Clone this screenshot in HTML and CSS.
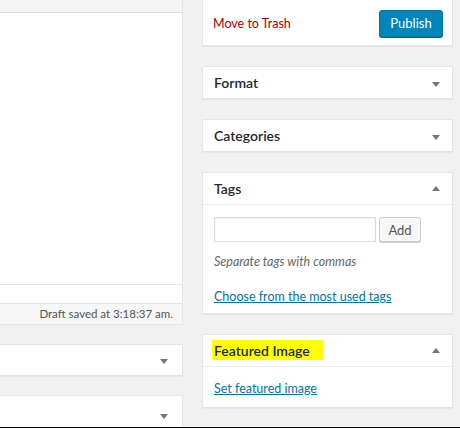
FILE: index.html
```html
<!DOCTYPE html>
<html>
<head>
<meta charset="utf-8">
<link rel="stylesheet" href="styles.css">
</head>
<body>
<div class="page">
  <div class="main">
    <div class="editor">
      <div class="toolbar"></div>
      <div class="content"></div>
      <div class="gap"></div>
      <div class="status">Draft saved at 3:18:37 am.</div>
    </div>
    <div class="postbox lbox"><span class="arrow down"></span></div>
    <div class="postbox lbox last"><span class="arrow down"></span></div>
  </div>
  <div class="side">
    <div class="postbox publish">
      <a class="trash">Move to Trash</a>
      <button class="btn-primary">Publish</button>
    </div>
    <div class="postbox">
      <div class="hndle"><h2>Format</h2><span class="arrow down"></span></div>
    </div>
    <div class="postbox">
      <div class="hndle"><h2>Categories</h2><span class="arrow down"></span></div>
    </div>
    <div class="postbox">
      <div class="hndle divided"><h2>Tags</h2><span class="arrow up"></span></div>
      <div class="inside tags">
        <div class="tag-row">
          <input class="tag-input" type="text">
          <button class="btn">Add</button>
        </div>
        <p class="howto">Separate tags with commas</p>
        <a class="link">Choose from the most used tags</a>
      </div>
    </div>
    <div class="postbox">
      <div class="hndle divided"><h2><span class="mark">Featured Image</span></h2><span class="arrow up"></span></div>
      <div class="inside featured">
        <a class="link">Set featured image</a>
      </div>
    </div>
  </div>
</div>
</body>
</html>
```
FILE: styles.css
```css
html, body {
  margin: 0;
  padding: 0;
  background: #f1f1f1;
}
body {
  font-family: Lato, "Open Sans", sans-serif;
  font-size: 12.5px;
  color: #444;
}
.page {
  height: 427px;
  border-bottom: 1px solid #000;
  overflow: hidden;
  display: flex;
  gap: 19px;
}
.main {
  width: 183px;
  flex: none;
  display: flex;
  flex-direction: column;
}
.main > * {
  flex: none;
}
.side {
  width: 251px;
  flex: none;
  display: flex;
  flex-direction: column;
  gap: 20px;
}
.side > * {
  flex: none;
}
.editor {
  border-right: 1px solid #e5e5e5;
  background: #fff;
}
.toolbar {
  height: 12px;
  background: #f5f5f5;
  border-bottom: 1px solid #dcdcdc;
}
.content {
  height: 271px;
  border-bottom: 1px solid #e5e5e5;
}
.gap {
  height: 18px;
}
.status {
  height: 20px;
  line-height: 20px;
  background: #f7f7f7;
  border-top: 1px solid #e5e5e5;
  border-bottom: 1px solid #e5e5e5;
  text-align: right;
  padding-right: 9px;
  color: #555;
  font-size: 11.5px;
}
.postbox {
  background: #fff;
  border: 1px solid #e5e5e5;
  box-shadow: 0 1px 1px rgba(0,0,0,0.04);
}
.lbox {
  border-left: none;
  margin-top: 19px;
  height: 30px;
  display: flex;
  align-items: center;
  justify-content: flex-end;
  padding-right: 14px;
}
.lbox.last {
  margin-top: 19px;
  height: 40px;
  align-items: flex-start;
  padding-top: 15px;
}
.publish {
  border-top: none;
  height: 46px;
  box-sizing: border-box;
  display: flex;
  align-items: center;
  justify-content: space-between;
  padding: 0 9px 0 10px;
}
.trash {
  color: #a00;
  margin-top: 1px;
}
.btn-primary {
  font-family: inherit;
  font-size: 13px;
  color: #fff;
  background: #0085ba;
  border: 1px solid #0073aa;
  border-radius: 3px;
  box-shadow: 0 1px 0 #006799;
  width: 64px;
  height: 27px;
  padding: 0;
  margin-top: 1px;
}
.hndle {
  height: 31px;
  display: flex;
  align-items: center;
  justify-content: space-between;
  padding: 0 12px 0 11px;
}
.hndle.divided {
  border-bottom: 1px solid #eee;
}
.hndle h2 {
  margin: 0;
  font-size: 14px;
  font-weight: 600;
  color: #23282d;
}
.mark {
  background: #ffff00;
  padding: 2px 13px 1px 2px;
  margin-left: -2px;
}
.arrow {
  width: 0;
  height: 0;
  border-left: 4px solid transparent;
  border-right: 4px solid transparent;
  margin-top: 3px;
}
.arrow.down {
  border-top: 5px solid #72777c;
}
.arrow.up {
  border-bottom: 5px solid #72777c;
  margin-top: 0;
}
.inside {
  padding: 12px 11px 7px;
}
.inside.featured {
  padding: 13px 11px 9px;
}
.tag-row {
  display: flex;
  align-items: center;
  gap: 3px;
}
.tag-input {
  width: 162px;
  height: 25px;
  box-sizing: border-box;
  border: 1px solid #ddd;
  box-shadow: inset 0 1px 2px rgba(0,0,0,0.07);
  margin: 0;
}
.btn {
  font-family: inherit;
  font-size: 13px;
  color: #555;
  background: #f7f7f7;
  border: 1px solid #ccc;
  border-radius: 3px;
  box-shadow: 0 1px 0 #ccc;
  width: 42px;
  height: 25px;
  padding: 0;
}
.howto {
  margin: 11px 0 17px;
  font-style: italic;
  color: #666;
  line-height: 18px;
}
.link {
  color: #0073aa;
  text-decoration: underline;
  line-height: 18px;
  display: block;
}
```
